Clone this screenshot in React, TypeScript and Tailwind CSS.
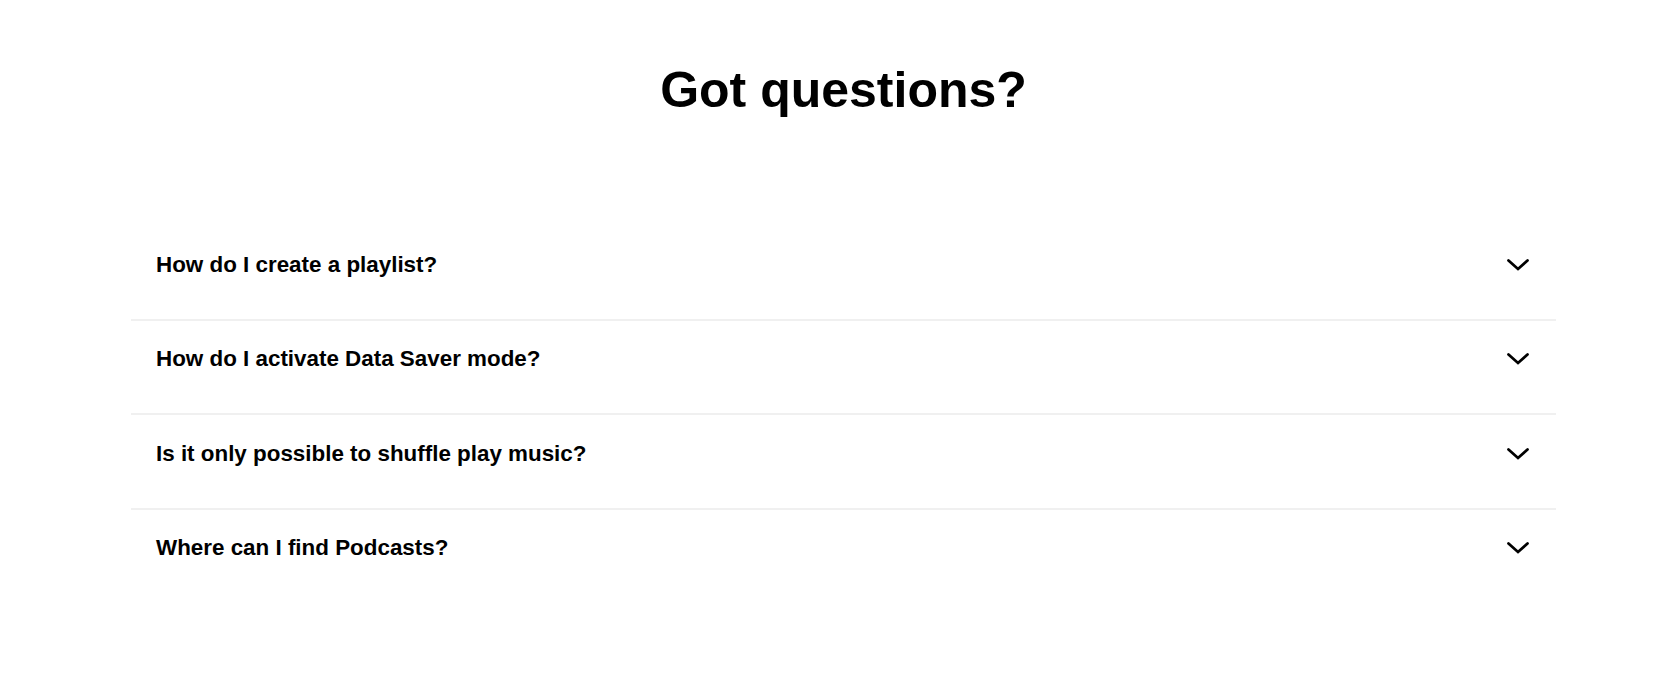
const questions = [
  "How do I create a playlist?",
  "How do I activate Data Saver mode?",
  "Is it only possible to shuffle play music?",
  "Where can I find Podcasts?",
];

function Chevron() {
  return (
    <svg width="24" height="14" viewBox="0 0 24 14" fill="none" className="shrink-0">
      <polyline
        points="2.5,2.5 12,11 21.5,2.5"
        stroke="#000"
        strokeWidth="2.75"
        strokeLinecap="round"
        strokeLinejoin="miter"
      />
    </svg>
  );
}

export default function App() {
  return (
    <div className="min-h-screen bg-white text-black font-['Liberation_Sans',Arial,sans-serif]">
      <section className="pl-[131px] pr-[100px] pt-[62px]">
        {/* Heading */}
        <h1 className="text-center text-[50px] leading-[56px] font-bold">Got questions?</h1>

        {/* FAQ list */}
        <div className="mt-[108px]">
          {questions.map((q, i) => (
            <div
              key={q}
              className={i < questions.length - 1 ? "border-b-2 border-[#f0f0f0]" : ""}
            >
              <button className="w-full flex items-center justify-between pl-[25px] pr-[26px] pt-[23.5px] pb-[39.1px] text-left">
                <span className="text-[22.4px] leading-[30px] font-bold">{q}</span>
                <Chevron />
              </button>
            </div>
          ))}
        </div>
      </section>
    </div>
  );
}
